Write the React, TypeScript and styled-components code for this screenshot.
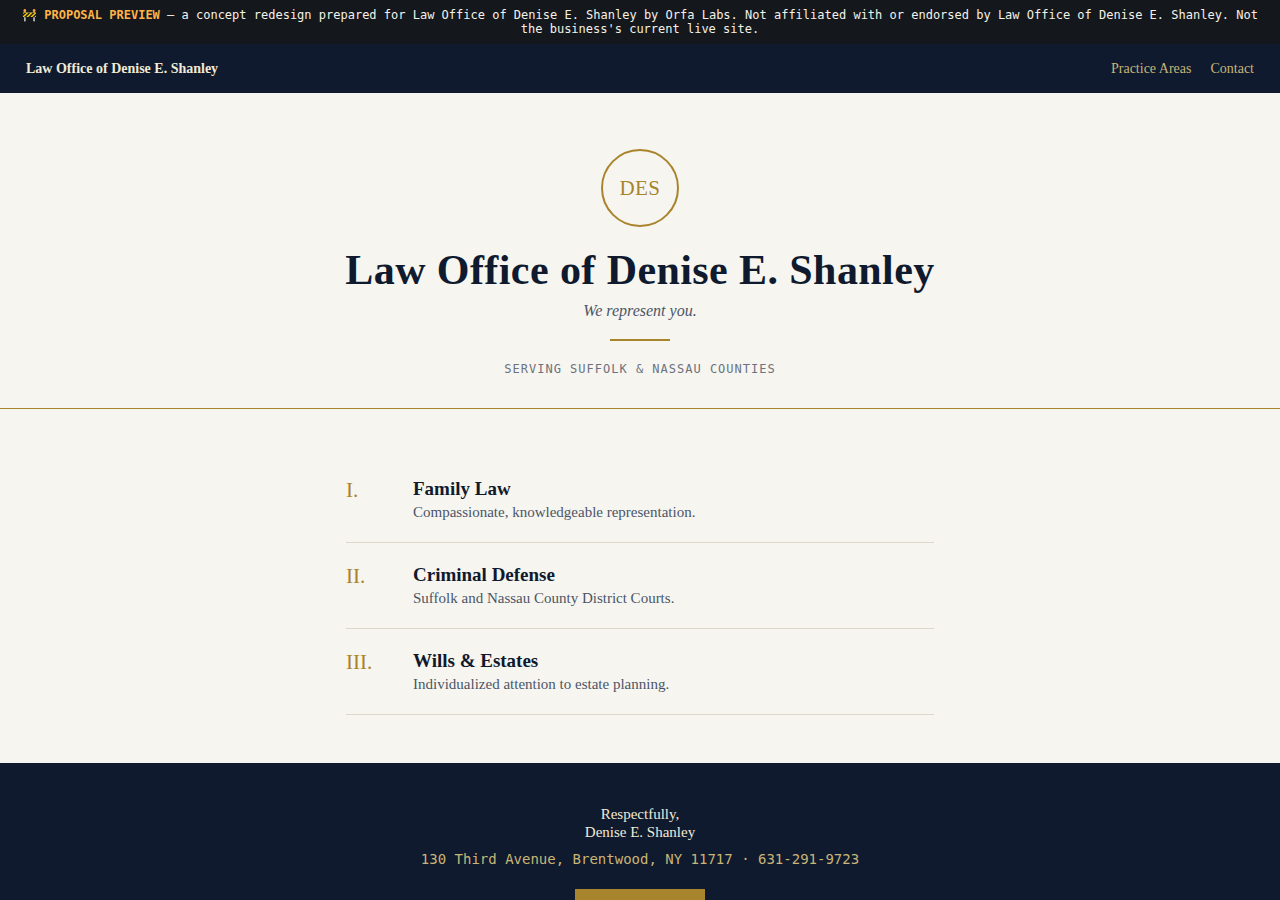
import React from "react";
import styled, { createGlobalStyle } from "styled-components";

const navy = "#0f1a2e";
const gold = "#a8842c";
const sand = "#c9b577";
const cream = "#f0ead6";
const slate = "#4a5568";
const paper = "#f7f5ef";
const serif = `"Liberation Serif", serif`;
const mono = `"DejaVu Sans Mono", monospace`;

const GlobalStyle = createGlobalStyle`
  * { box-sizing: border-box; }
  html { scrollbar-width: none; }
  body { margin: 0; background: ${paper}; color: ${navy}; font-family: ${serif}; }
  h1, h2, p, ol { margin: 0; padding: 0; }
`;

const Notice = styled.div`
  background: #14181c;
  color: #f4f1e8;
  font: 12px/14px ${mono};
  text-align: center;
  padding: 8px 16px;
`;
const NoticeLabel = styled.strong`
  color: #ffb347;
`;
const Bar = styled.header`
  background: ${navy};
  display: flex;
  justify-content: space-between;
  align-items: center;
  padding: 16px 26px;
  font-size: 14px;
  line-height: 17px;
`;
const Brand = styled.span`
  color: ${cream};
  font-weight: bold;
`;
const Nav = styled.nav`
  display: flex;
  gap: 19px;
`;
const NavLink = styled.a`
  color: ${sand};
  text-decoration: none;
`;
const Hero = styled.section`
  display: flex;
  flex-direction: column;
  align-items: center;
  text-align: center;
  padding: 56px 24px 32px;
  border-bottom: 1px solid ${gold};
`;
const Monogram = styled.div`
  display: flex;
  align-items: center;
  justify-content: center;
  width: 78px;
  height: 78px;
  border: 2px solid ${gold};
  border-radius: 50%;
  color: ${gold};
  font-size: 21px;
  letter-spacing: 0.02em;
`;
const Title = styled.h1`
  margin-top: 19px;
  font-size: 42px;
  line-height: 48px;
  letter-spacing: 0.01em;
`;
const Tagline = styled.p`
  margin-top: 8px;
  color: ${slate};
  font-size: 16px;
  line-height: 18px;
  font-style: italic;
`;
const Rule = styled.div`
  width: 60px;
  height: 2px;
  margin: 19px 0 21px;
  background: ${gold};
`;
const Area = styled.p`
  color: #6b7280;
  font: 12px/14px ${mono};
  letter-spacing: 1px;
  text-transform: uppercase;
`;
const Practices = styled.ol`
  list-style: none;
  max-width: 588px;
  margin: 0 auto;
  padding: 48px 0;
`;
const Practice = styled.li`
  display: grid;
  grid-template-columns: 48px 1fr;
  column-gap: 19px;
  padding: 21px 0;
  border-bottom: 1px solid #ddd8c8;
`;
const Numeral = styled.span`
  color: ${gold};
  font-size: 21px;
  line-height: 24px;
`;
const PracticeName = styled.h2`
  font-size: 19px;
  line-height: 21px;
`;
const PracticeText = styled.p`
  margin-top: 5px;
  color: ${slate};
  font-size: 15px;
  line-height: 17px;
`;
const Footer = styled.footer`
  background: ${navy};
  color: ${cream};
  padding: 42px 24px 40px;
  text-align: center;
`;
const Signature = styled.p`
  font-size: 15px;
  line-height: 18px;
`;
const Address = styled.p`
  margin: 10px 0 22px;
  color: ${sand};
  font: 14px/16px ${mono};
`;
const CallButton = styled.a`
  display: inline-block;
  width: 130px;
  height: 42px;
  background: ${gold};
`;

const practices = [
  { numeral: "I.", name: "Family Law", text: "Compassionate, knowledgeable representation." },
  { numeral: "II.", name: "Criminal Defense", text: "Suffolk and Nassau County District Courts." },
  { numeral: "III.", name: "Wills & Estates", text: "Individualized attention to estate planning." },
];

export default function App() {
  return (
    <>
      <GlobalStyle />
      <Notice>
        🚧 <NoticeLabel>PROPOSAL PREVIEW</NoticeLabel> — a concept redesign prepared for Law Office of
        Denise E. Shanley by Orfa Labs. Not affiliated with or endorsed by Law Office of Denise E.
        Shanley. Not the business's current live site.
      </Notice>
      <Bar>
        <Brand>Law Office of Denise E. Shanley</Brand>
        <Nav>
          <NavLink href="#practice">Practice Areas</NavLink>
          <NavLink href="#contact">Contact</NavLink>
        </Nav>
      </Bar>
      <main>
        <Hero>
          <Monogram>DES</Monogram>
          <Title>Law Office of Denise E. Shanley</Title>
          <Tagline>We represent you.</Tagline>
          <Rule />
          <Area>Serving Suffolk &amp; Nassau Counties</Area>
        </Hero>
        <Practices id="practice">
          {practices.map((p) => (
            <Practice key={p.numeral}>
              <Numeral>{p.numeral}</Numeral>
              <div>
                <PracticeName>{p.name}</PracticeName>
                <PracticeText>{p.text}</PracticeText>
              </div>
            </Practice>
          ))}
        </Practices>
      </main>
      <Footer id="contact">
        <Signature>
          Respectfully,
          <br />
          Denise E. Shanley
        </Signature>
        <Address>130 Third Avenue, Brentwood, NY 11717 · 631-291-9723</Address>
        <CallButton href="tel:6312919723" aria-label="Call 631-291-9723" />
      </Footer>
    </>
  );
}
